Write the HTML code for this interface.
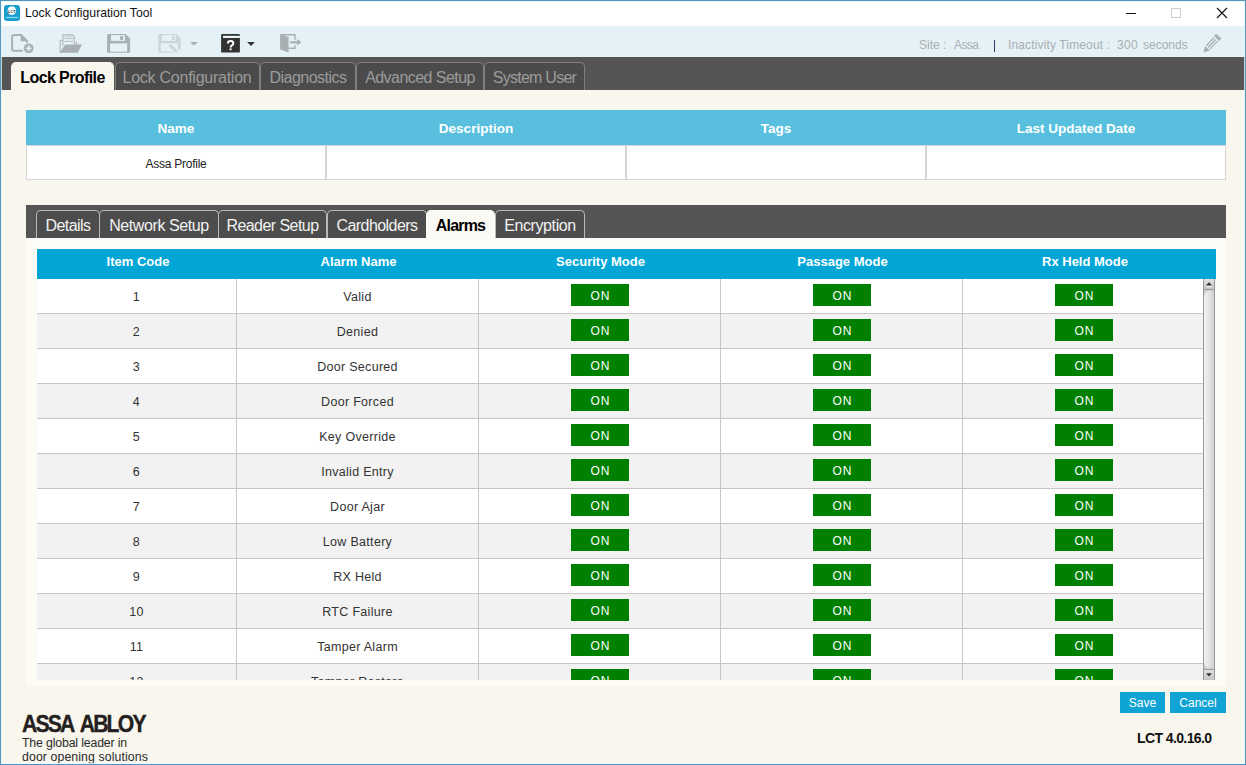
<!DOCTYPE html>
<html><head><meta charset="utf-8">
<style>
*{box-sizing:border-box}
html,body{margin:0;padding:0}
body{width:1246px;height:765px;position:relative;overflow:hidden;background:#f9f6ee;font-family:"Liberation Sans",sans-serif;}
.a{position:absolute}
svg{position:absolute;overflow:visible}
#frame{left:0;top:0;width:1246px;height:765px;border:1px solid #5b94b8;border-bottom-color:#4198d5;z-index:50}
#frame2{left:1px;top:1px;width:1244px;height:763px;border:1px solid #dcfafd;border-bottom-color:#f4fdfe;z-index:49;opacity:0.8}
#title{left:1px;top:1px;width:1244px;height:25px;background:#fff}
#tb{left:1px;top:26px;width:1244px;height:31px;background:#e4f1f6}
#mtabs{left:1px;top:57px;width:1244px;height:33px;background:#555555}
.mt{top:5px;height:28px;border:1px solid #7f7f7f;border-bottom:none;border-radius:5px 5px 0 0;background:#4b4b4b;color:#9c9c9c;font-size:16px;line-height:29px;text-align:center;white-space:nowrap;letter-spacing:-0.55px}
.mt.act{background:#f9f6ee;color:#000;font-weight:bold;border-color:#f9f6ee;letter-spacing:-0.6px}
.ht{left:26px;top:110px;width:1200px;height:70px}
.hh{top:0;height:35px;background:#58c0de;color:#fff;font-weight:bold;font-size:13.5px;line-height:38px;text-align:center}
.hc{top:35px;height:35px;background:#fff;border:1px solid #d4d4d4;font-size:12px;line-height:36px;text-align:center;color:#222}
#panel{left:26px;top:205px;width:1200px;height:481px;background:#fdfbf6}
#itabs{left:0;top:0;width:1200px;height:33px;background:#555555}
.it{top:5px;height:28px;border:1px solid #b9b9b9;border-bottom:none;border-radius:5px 5px 0 0;background:#4c4c4c;color:#f2f2f2;font-size:16px;line-height:29px;text-align:center;white-space:nowrap;letter-spacing:-0.55px}
.it.act{background:#fbf9f4;color:#000;font-weight:bold;border-color:#fbf9f4;letter-spacing:-0.8px}
.th{top:44px;height:30px;padding-left:3px;background:#02a6d6;color:#fff;font-weight:bold;font-size:13px;line-height:26px;text-align:center}
.row{left:0;width:1166px;height:35px;border-bottom:1px solid #c6c6c6}
.vl{top:0;width:1px;height:35px;background:#c6c6c6}
.cell{top:0;height:34px;line-height:36px;text-align:center;font-size:12.5px;color:#333;letter-spacing:0.3px}
.on{top:5px;width:58px;height:22px;background:#008000;color:#fff;font-size:12px;line-height:24px;text-align:center;letter-spacing:1px;text-indent:1px}
.btn{top:692px;height:21px;background:#10a4d5;color:#fff;font-size:12px;line-height:23px;text-align:center}
.tt{font-size:12px;line-height:16px;color:#a9aeb1;white-space:nowrap}
</style></head><body>
<div id="frame" class="a"></div><div id="frame2" class="a"></div>
<div id="title" class="a">
  <svg style="left:0;top:0" width="40" height="25" viewBox="1 1 40 25">
    <rect x="4" y="5" width="16" height="16" rx="3" fill="#1a9dcd"/>
    <circle cx="11.8" cy="10.6" r="4.3" fill="#f4fdff"/>
    <text x="11.8" y="12.6" font-family="Liberation Sans" font-size="3.8" font-weight="bold" fill="#333" text-anchor="middle">LCT</text>
    <rect x="5.8" y="16.8" width="12.4" height="1.4" fill="#7ad8f2"/>
  </svg>
  <div class="a" style="left:24px;top:4px;font-size:12.2px;line-height:16px;color:#111;white-space:nowrap">Lock Configuration Tool</div>
  <svg style="left:0;top:0" width="1244" height="25" viewBox="1 1 1244 25">
    <rect x="1126" y="13" width="10" height="1" fill="#111"/>
    <rect x="1171.5" y="8.5" width="9" height="9" fill="none" stroke="#cfcfcf" stroke-width="1"/>
    <path d="M1217 8 L1227 18 M1227 8 L1217 18" stroke="#111" stroke-width="1.1"/>
  </svg>
</div>
<div id="tb" class="a">
  <svg style="left:0;top:0" width="1244" height="31" viewBox="1 26 1244 31">
    <!-- new -->
    <g fill="none" stroke="#a9b0b3" stroke-width="1.9">
      <path d="M22.6 50.8 H14 Q12.1 50.8 12.1 48.9 V37 Q12.1 35 14 35 H21.2 L27 40.8 V42.8"/>
    </g>
    <path d="M20.6 34.2 L28 41.2 L20.6 41.2 Z" fill="#a9b0b3"/>
    <circle cx="28.7" cy="48.3" r="4.9" fill="#a9b0b3"/>
    <rect x="25.9" y="47.5" width="5.6" height="1.6" fill="#e4f1f6"/>
    <rect x="27.9" y="45.5" width="1.6" height="5.6" fill="#e4f1f6"/>
    <!-- open -->
    <g fill="none" stroke="#b3babd" stroke-width="1.2">
      <path d="M62.5 52.2 H60.2 V40.6 H62.8"/>
      <path d="M62.9 46 V34.9 H72.5 L74.3 36.7 V44.5"/>
    </g>
    <g stroke="#a9b0b3" stroke-width="0.8" fill="none">
      <path d="M64.5 38.4 H73 M64.5 41.4 H73"/>
    </g>
    <path d="M64.5 36.2 H72" stroke="#c5cdd0" stroke-width="0.8"/>
    <rect x="75.8" y="42" width="1.2" height="3" fill="#a9b0b3"/>
    <path d="M65.2 44.6 H82 L77.8 52.8 H59.8 Z" fill="#a9b0b3"/>
    <!-- save -->
    <path d="M108.6 34 H125.6 L130.1 38.5 V51.3 Q130.1 52.8 128.6 52.8 H108.6 Q107.1 52.8 107.1 51.3 V35.5 Q107.1 34 108.6 34 Z" fill="#a9b0b3"/>
    <rect x="111" y="35.1" width="13.9" height="5.8" fill="#e4f1f6"/>
    <rect x="120.2" y="36" width="2.8" height="4" fill="#a9b0b3"/>
    <rect x="110" y="43.4" width="17.1" height="8.3" fill="#e4f1f6"/>
    <!-- save as (disabled) -->
    <path d="M159.9 34 H176.3 L180.7 38.4 V51.2 Q180.7 52.7 179.2 52.7 H159.9 Q158.4 52.7 158.4 51.2 V35.5 Q158.4 34 159.9 34 Z" fill="#cdd5d9"/>
    <rect x="161.8" y="35.1" width="13.9" height="5.8" fill="#e4f1f6"/>
    <rect x="172" y="36" width="2.4" height="4" fill="#cdd5d9"/>
    <rect x="160.8" y="43.2" width="17.2" height="8.4" fill="#e4f1f6"/>
    <path d="M172.5 53.5 L181.5 53.5 L181.5 48.5 Z" fill="#e4f1f6"/>
    <path d="M169.8 44.8 L176.8 51.8" stroke="#e4f1f6" stroke-width="5"/>
    <path d="M169.8 44.8 L176.6 51.6" stroke="#cfd7db" stroke-width="3"/>
    <path d="M176.5 51.5 L178.2 53.2" stroke="#d9e1e4" stroke-width="1.6"/>
    <path d="M190.1 42.1 H197.8 L194 45.8 Z" fill="#a9b0b3"/>
    <!-- help -->
    <rect x="221.1" y="34.1" width="18.8" height="18.5" rx="1.2" fill="#333333"/>
    <rect x="223" y="35.8" width="16.9" height="2.2" fill="#e8f1f5"/>
    <path d="M227.9 43.4 Q227.9 41.1 230.6 41.1 Q233.3 41.1 233.3 43.3 Q233.3 44.6 231.9 45.4 Q230.6 46.1 230.6 47.5" fill="none" stroke="#fff" stroke-width="2"/><rect x="229.6" y="48.4" width="2" height="1.8" fill="#fff"/>
    <path d="M247.1 42 H254.9 L251 45.9 Z" fill="#333"/>
    <!-- exit -->
    <path d="M281 34.8 H295 V39.7 M295 45 V48.3 H288.5" fill="none" stroke="#a9b0b3" stroke-width="1.4"/>
    <path d="M280.1 34.1 L288.6 37.2 V52.6 L280.1 49.6 Z" fill="#a9b0b3"/>
    <rect x="290.1" y="41.2" width="7.5" height="2.2" fill="#a9b0b3"/>
    <path d="M297.2 38.9 L301.3 42.3 L297.2 45.8 Z" fill="#a9b0b3"/>
    <!-- pencil -->
    <g transform="translate(1203.4 52.6) rotate(-47)" fill="#a9b0b3">
      <path d="M0 0 L6 -3.2 V3.2 Z"/>
      <rect x="7" y="-3.1" width="11" height="1.3"/>
      <rect x="7" y="-0.65" width="11" height="1.3"/>
      <rect x="7" y="1.8" width="11" height="1.3"/>
      <rect x="19.3" y="-3.6" width="3.2" height="7.2"/>
    </g>
  </svg>
  <div class="a tt" style="left:918px;top:11px">Site :</div>
  <div class="a tt" style="left:953px;top:11px;letter-spacing:-0.6px">Assa</div>
  <div class="a" style="left:993px;top:14px;width:1px;height:12px;background:#333a66"></div>
  <div class="a tt" style="left:1007px;top:11px;letter-spacing:0.14px">Inactivity Timeout :</div>
  <div class="a tt" style="left:1116px;top:11px;letter-spacing:0.3px">300</div>
  <div class="a tt" style="left:1142px;top:11px">seconds</div>
</div>
<div id="mtabs" class="a">
  <div class="a mt act" style="left:10px;width:103px">Lock Profile</div>
  <div class="a mt" style="left:114px;width:145px;letter-spacing:-0.25px;padding-right:1px">Lock Configuration</div>
  <div class="a mt" style="left:259px;width:96px;letter-spacing:-0.5px">Diagnostics</div>
  <div class="a mt" style="left:355px;width:128px">Advanced Setup</div>
  <div class="a mt" style="left:483px;width:101px;letter-spacing:-0.75px">System User</div>
</div>
<div class="a ht">
  <div class="a hh" style="left:0;width:300px">Name</div>
  <div class="a hh" style="left:300px;width:300px">Description</div>
  <div class="a hh" style="left:600px;width:300px">Tags</div>
  <div class="a hh" style="left:900px;width:300px">Last Updated Date</div>
  <div class="a hc" style="left:0;width:300px;letter-spacing:-0.25px">Assa Profile</div>
  <div class="a hc" style="left:300px;width:300px"></div>
  <div class="a hc" style="left:600px;width:300px"></div>
  <div class="a hc" style="left:900px;width:300px"></div>
</div>
<div id="panel" class="a">
  <div id="itabs" class="a">
    <div class="a it" style="left:10px;width:64px">Details</div>
    <div class="a it" style="left:73px;width:120px;letter-spacing:-0.4px">Network Setup</div>
    <div class="a it" style="left:192px;width:109px">Reader Setup</div>
    <div class="a it" style="left:301px;width:100px">Cardholders</div>
    <div class="a it act" style="left:400px;width:69px">Alarms</div>
    <div class="a it" style="left:469px;width:90px;letter-spacing:-0.4px">Encryption</div>
  </div>
  <div class="a th" style="left:11px;width:199px">Item Code</div>
  <div class="a th" style="left:210px;width:242px">Alarm Name</div>
  <div class="a th" style="left:452px;width:242px">Security Mode</div>
  <div class="a th" style="left:694px;width:242px">Passage Mode</div>
  <div class="a th" style="left:936px;width:254px;padding-right:11px">Rx Held Mode</div>
  <div id="rows" class="a" style="left:11px;top:74px;width:1166px;height:401px;overflow:hidden">
<div class="a row" style="top:0px;background:#fff"><div class="a cell" style="left:0;width:199px">1</div><div class="a vl" style="left:199px"></div><div class="a cell" style="left:200px;width:241px">Valid</div><div class="a vl" style="left:441px"></div><div class="a on" style="left:534px">ON</div><div class="a vl" style="left:683px"></div><div class="a on" style="left:776px">ON</div><div class="a vl" style="left:925px"></div><div class="a on" style="left:1018px">ON</div></div>
<div class="a row" style="top:35px;background:#f2f2f2"><div class="a cell" style="left:0;width:199px">2</div><div class="a vl" style="left:199px"></div><div class="a cell" style="left:200px;width:241px">Denied</div><div class="a vl" style="left:441px"></div><div class="a on" style="left:534px">ON</div><div class="a vl" style="left:683px"></div><div class="a on" style="left:776px">ON</div><div class="a vl" style="left:925px"></div><div class="a on" style="left:1018px">ON</div></div>
<div class="a row" style="top:70px;background:#fff"><div class="a cell" style="left:0;width:199px">3</div><div class="a vl" style="left:199px"></div><div class="a cell" style="left:200px;width:241px">Door Secured</div><div class="a vl" style="left:441px"></div><div class="a on" style="left:534px">ON</div><div class="a vl" style="left:683px"></div><div class="a on" style="left:776px">ON</div><div class="a vl" style="left:925px"></div><div class="a on" style="left:1018px">ON</div></div>
<div class="a row" style="top:105px;background:#f2f2f2"><div class="a cell" style="left:0;width:199px">4</div><div class="a vl" style="left:199px"></div><div class="a cell" style="left:200px;width:241px">Door Forced</div><div class="a vl" style="left:441px"></div><div class="a on" style="left:534px">ON</div><div class="a vl" style="left:683px"></div><div class="a on" style="left:776px">ON</div><div class="a vl" style="left:925px"></div><div class="a on" style="left:1018px">ON</div></div>
<div class="a row" style="top:140px;background:#fff"><div class="a cell" style="left:0;width:199px">5</div><div class="a vl" style="left:199px"></div><div class="a cell" style="left:200px;width:241px">Key Override</div><div class="a vl" style="left:441px"></div><div class="a on" style="left:534px">ON</div><div class="a vl" style="left:683px"></div><div class="a on" style="left:776px">ON</div><div class="a vl" style="left:925px"></div><div class="a on" style="left:1018px">ON</div></div>
<div class="a row" style="top:175px;background:#f2f2f2"><div class="a cell" style="left:0;width:199px">6</div><div class="a vl" style="left:199px"></div><div class="a cell" style="left:200px;width:241px">Invalid Entry</div><div class="a vl" style="left:441px"></div><div class="a on" style="left:534px">ON</div><div class="a vl" style="left:683px"></div><div class="a on" style="left:776px">ON</div><div class="a vl" style="left:925px"></div><div class="a on" style="left:1018px">ON</div></div>
<div class="a row" style="top:210px;background:#fff"><div class="a cell" style="left:0;width:199px">7</div><div class="a vl" style="left:199px"></div><div class="a cell" style="left:200px;width:241px">Door Ajar</div><div class="a vl" style="left:441px"></div><div class="a on" style="left:534px">ON</div><div class="a vl" style="left:683px"></div><div class="a on" style="left:776px">ON</div><div class="a vl" style="left:925px"></div><div class="a on" style="left:1018px">ON</div></div>
<div class="a row" style="top:245px;background:#f2f2f2"><div class="a cell" style="left:0;width:199px">8</div><div class="a vl" style="left:199px"></div><div class="a cell" style="left:200px;width:241px">Low Battery</div><div class="a vl" style="left:441px"></div><div class="a on" style="left:534px">ON</div><div class="a vl" style="left:683px"></div><div class="a on" style="left:776px">ON</div><div class="a vl" style="left:925px"></div><div class="a on" style="left:1018px">ON</div></div>
<div class="a row" style="top:280px;background:#fff"><div class="a cell" style="left:0;width:199px">9</div><div class="a vl" style="left:199px"></div><div class="a cell" style="left:200px;width:241px">RX Held</div><div class="a vl" style="left:441px"></div><div class="a on" style="left:534px">ON</div><div class="a vl" style="left:683px"></div><div class="a on" style="left:776px">ON</div><div class="a vl" style="left:925px"></div><div class="a on" style="left:1018px">ON</div></div>
<div class="a row" style="top:315px;background:#f2f2f2"><div class="a cell" style="left:0;width:199px">10</div><div class="a vl" style="left:199px"></div><div class="a cell" style="left:200px;width:241px">RTC Failure</div><div class="a vl" style="left:441px"></div><div class="a on" style="left:534px">ON</div><div class="a vl" style="left:683px"></div><div class="a on" style="left:776px">ON</div><div class="a vl" style="left:925px"></div><div class="a on" style="left:1018px">ON</div></div>
<div class="a row" style="top:350px;background:#fff"><div class="a cell" style="left:0;width:199px">11</div><div class="a vl" style="left:199px"></div><div class="a cell" style="left:200px;width:241px">Tamper Alarm</div><div class="a vl" style="left:441px"></div><div class="a on" style="left:534px">ON</div><div class="a vl" style="left:683px"></div><div class="a on" style="left:776px">ON</div><div class="a vl" style="left:925px"></div><div class="a on" style="left:1018px">ON</div></div>
<div class="a row" style="top:385px;background:#f2f2f2"><div class="a cell" style="left:0;width:199px">12</div><div class="a vl" style="left:199px"></div><div class="a cell" style="left:200px;width:241px">Tamper Restore</div><div class="a vl" style="left:441px"></div><div class="a on" style="left:534px">ON</div><div class="a vl" style="left:683px"></div><div class="a on" style="left:776px">ON</div><div class="a vl" style="left:925px"></div><div class="a on" style="left:1018px">ON</div></div>
  </div>
  <div id="sb" class="a" style="left:1177px;top:74px;width:12px;height:401px;background:#e6e6e6;border-left:1px solid #9a9a9a;border-right:1px solid #9a9a9a">
    <div class="a" style="left:0;top:0;width:10px;height:10px;background:linear-gradient(#e2e2e2,#c4c4c4)"></div>
    <svg style="left:0;top:0" width="10" height="10"><path d="M2 6.6 L5 3.3 L8 6.6 Z" fill="#333"/><rect x="2" y="7.2" width="6" height="0.9" fill="#fff"/></svg>
    <div class="a" style="left:0;top:10px;width:10px;height:1px;background:#9a9a9a"></div>
    <div class="a" style="left:0;top:11px;width:10px;height:379px;background:#cfcfcf"></div><div class="a" style="left:0;top:12px;width:10px;height:377px;border-radius:5px/7px;background:linear-gradient(90deg,#f4f4f4,#d2d2d2)"></div>
    <div class="a" style="left:0;top:390px;width:10px;height:1px;background:#9a9a9a"></div>
    <div class="a" style="left:0;top:391px;width:10px;height:10px;background:linear-gradient(#e2e2e2,#c4c4c4)"></div>
    <svg style="left:0;top:391px" width="10" height="10"><path d="M2 3.2 L5 6.5 L8 3.2 Z" fill="#333"/></svg>
  </div>
</div>
<div class="a btn" style="left:1120px;width:45px">Save</div>
<div class="a btn" style="left:1170px;width:56px">Cancel</div>
<div class="a" style="left:1137px;top:730px;font-size:14px;font-weight:bold;line-height:16px;color:#111;white-space:nowrap;letter-spacing:-0.6px">LCT 4.0.16.0</div>
<div class="a" style="left:22px;top:712px;font-size:23.5px;font-weight:bold;line-height:24px;color:#231f20;letter-spacing:-2px;word-spacing:4px;white-space:nowrap;transform:scaleX(0.9);-webkit-text-stroke:0.4px #231f20;transform-origin:0 0">ASSA ABLOY</div>
<div class="a" style="left:22px;top:736px;font-size:12.3px;line-height:14px;color:#2b2b2b;white-space:nowrap;letter-spacing:-0.15px">The global leader in</div>
<div class="a" style="left:22px;top:750px;font-size:12.3px;line-height:14px;color:#2b2b2b;white-space:nowrap;letter-spacing:0.1px">door opening solutions</div>
</body></html>
